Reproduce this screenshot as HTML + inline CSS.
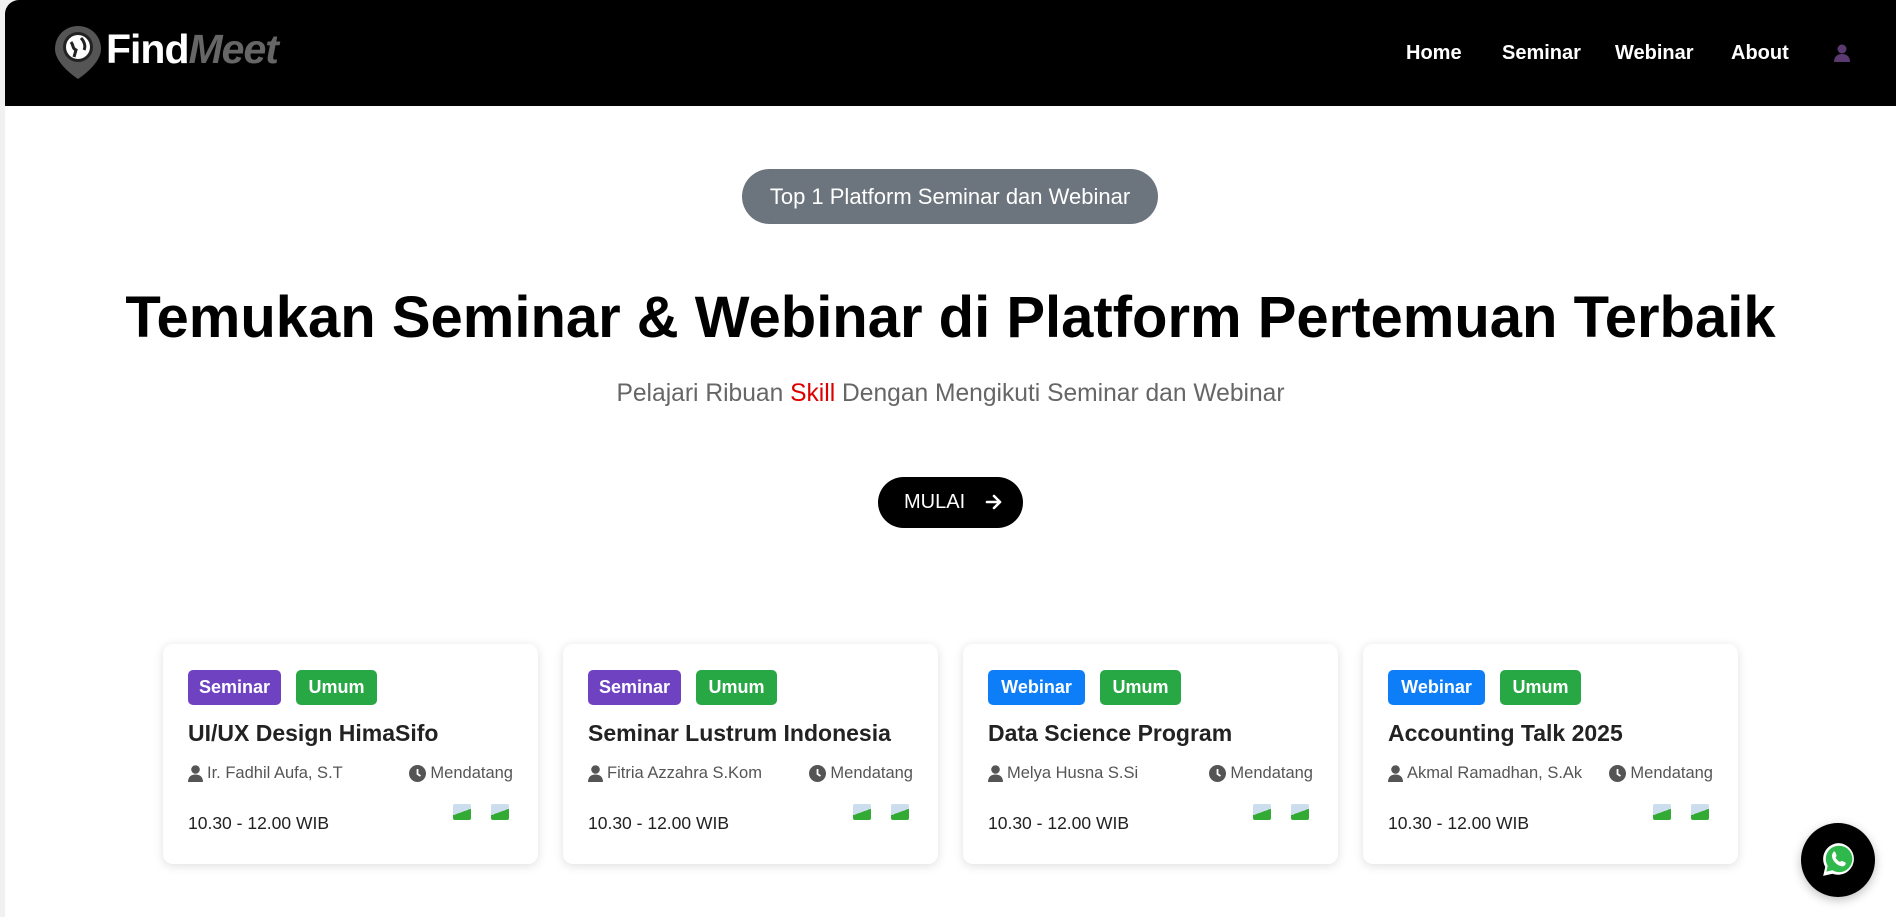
<!DOCTYPE html>
<html><head><meta charset="utf-8"><style>
*{margin:0;padding:0;box-sizing:border-box}
body{width:1896px;height:917px;overflow:hidden;background:#f1f1f1;font-family:"Liberation Sans",sans-serif;position:relative}
.page{position:absolute;left:5px;top:0;width:1891px;height:917px;background:#fff;border-radius:14px 0 0 0;overflow:hidden}
nav{position:absolute;left:0;top:0;width:100%;height:106px;background:#000}
.logo{position:absolute;left:48px;top:24px}
.brand{position:absolute;left:101px;top:26px;font-size:41px;font-weight:bold;color:#fff;letter-spacing:-1px}
.brand i{color:#666}
.nl{position:absolute;top:42px;font-size:20px;font-weight:bold;color:#fff}
.pill{position:absolute;left:737px;top:169px;width:416px;height:55px;border-radius:28px;background:#6c757d;color:#fff;font-size:22px;text-align:center;line-height:55px}
h1{position:absolute;left:0;width:1891px;top:284px;text-align:center;font-size:58px;font-weight:bold;color:#000}
.sub{position:absolute;left:0;width:1891px;top:380px;text-align:center;font-size:24.6px;color:#666}
.sub span{color:#d00}
.btn{position:absolute;left:873px;top:477px;width:145px;height:51px;border-radius:26px;background:#000;color:#fff;font-size:20px;line-height:51px;padding-left:26px}
.card{position:absolute;top:644px;width:375px;height:220px;background:#fff;border-radius:10px;box-shadow:0 2px 10px rgba(0,0,0,.13)}
.b{position:absolute;top:26px;height:35px;border-radius:5px;color:#fff;font-weight:bold;font-size:18px;line-height:35px;text-align:center}
.t{position:absolute;left:25px;top:76px;font-size:23px;font-weight:bold;color:#222}
.m{position:absolute;top:120px;font-size:16.5px;color:#555;display:flex;align-items:center;gap:4px;white-space:nowrap}
.tm{position:absolute;left:25px;top:169px;font-size:17.5px;color:#222}
.av{position:absolute;top:160px;width:22px;height:30px;overflow:hidden}
.av div{width:18px;height:16px;background:linear-gradient(160deg,#cde 50%,#3a3 50%);border-radius:2px}
.wa{position:absolute;left:1796px;top:823px;width:74px;height:74px;border-radius:50%;background:#000;box-shadow:0 3px 10px rgba(0,0,0,.25)}
</style></head><body><div class="page">
<nav>
<svg class="logo" width="50" height="56" viewBox="0 0 50 56"><path d="M25 2C12 2 2 12 2 25c0 12 14 24 23 30 9-6 23-18 23-30C48 12 38 2 25 2z" fill="#555"/><circle cx="25" cy="23" r="15" fill="#222"/><circle cx="25" cy="23" r="12" fill="#fff"/><path d="M18 18c3 4 1 6 5 8l-2 7M28 14c3 3 5 8 3 12" stroke="#222" stroke-width="3" fill="none"/></svg>
<div class="brand">Find<i>Meet</i></div>
<div class="nl" style="left:1401px">Home</div>
<div class="nl" style="left:1497px">Seminar</div>
<div class="nl" style="left:1610px">Webinar</div>
<div class="nl" style="left:1726px">About</div>
<svg style="position:absolute;left:1828px;top:44px" width="18" height="18" viewBox="0 0 18 18"><circle cx="9" cy="5" r="4.5" fill="#5a3a70"/><path d="M1 18c0-6 4-8 8-8s8 2 8 8z" fill="#5a3a70"/></svg>
</nav>
<div class="pill">Top 1 Platform Seminar dan Webinar</div>
<h1>Temukan Seminar &amp; Webinar di Platform Pertemuan Terbaik</h1>
<div class="sub">Pelajari Ribuan <span>Skill</span> Dengan Mengikuti Seminar dan Webinar</div>
<div class="btn">MULAI <svg style="margin-left:14px;vertical-align:-3px" width="18" height="18" viewBox="0 0 18 18"><path d="M2 9h13M9 3l6 6-6 6" stroke="#fff" stroke-width="2.6" fill="none" stroke-linecap="round" stroke-linejoin="round"/></svg></div>

<div class="card" style="left:158px"><div class="b" style="left:25px;width:93px;background:#6f42c1">Seminar</div><div class="b" style="left:133px;width:81px;background:#28a745">Umum</div><div class="t">UI/UX Design HimaSifo</div><div class="m" style="left:25px"><svg width="15" height="17" viewBox="0 0 15 17"><circle cx="7.5" cy="4.5" r="4.3" fill="#555"/><path d="M0 17c0-5 3-7.5 7.5-7.5S15 12 15 17z" fill="#555"/></svg>Ir. Fadhil Aufa, S.T</div><div class="m" style="right:25px"><svg width="17" height="17" viewBox="0 0 17 17"><circle cx="8.5" cy="8.5" r="8.5" fill="#555"/><path d="M8.5 4v5l3 2" stroke="#fff" stroke-width="1.8" fill="none"/></svg>Mendatang</div><div class="tm">10.30 - 12.00 WIB</div><div class="av" style="left:290px"><div></div></div><div class="av" style="left:328px"><div></div></div></div>

<div class="card" style="left:558px"><div class="b" style="left:25px;width:93px;background:#6f42c1">Seminar</div><div class="b" style="left:133px;width:81px;background:#28a745">Umum</div><div class="t">Seminar Lustrum Indonesia</div><div class="m" style="left:25px"><svg width="15" height="17" viewBox="0 0 15 17"><circle cx="7.5" cy="4.5" r="4.3" fill="#555"/><path d="M0 17c0-5 3-7.5 7.5-7.5S15 12 15 17z" fill="#555"/></svg>Fitria Azzahra S.Kom</div><div class="m" style="right:25px"><svg width="17" height="17" viewBox="0 0 17 17"><circle cx="8.5" cy="8.5" r="8.5" fill="#555"/><path d="M8.5 4v5l3 2" stroke="#fff" stroke-width="1.8" fill="none"/></svg>Mendatang</div><div class="tm">10.30 - 12.00 WIB</div><div class="av" style="left:290px"><div></div></div><div class="av" style="left:328px"><div></div></div></div>

<div class="card" style="left:958px"><div class="b" style="left:25px;width:97px;background:#0d7ef8">Webinar</div><div class="b" style="left:137px;width:81px;background:#28a745">Umum</div><div class="t">Data Science Program</div><div class="m" style="left:25px"><svg width="15" height="17" viewBox="0 0 15 17"><circle cx="7.5" cy="4.5" r="4.3" fill="#555"/><path d="M0 17c0-5 3-7.5 7.5-7.5S15 12 15 17z" fill="#555"/></svg>Melya Husna S.Si</div><div class="m" style="right:25px"><svg width="17" height="17" viewBox="0 0 17 17"><circle cx="8.5" cy="8.5" r="8.5" fill="#555"/><path d="M8.5 4v5l3 2" stroke="#fff" stroke-width="1.8" fill="none"/></svg>Mendatang</div><div class="tm">10.30 - 12.00 WIB</div><div class="av" style="left:290px"><div></div></div><div class="av" style="left:328px"><div></div></div></div>

<div class="card" style="left:1358px"><div class="b" style="left:25px;width:97px;background:#0d7ef8">Webinar</div><div class="b" style="left:137px;width:81px;background:#28a745">Umum</div><div class="t">Accounting Talk 2025</div><div class="m" style="left:25px"><svg width="15" height="17" viewBox="0 0 15 17"><circle cx="7.5" cy="4.5" r="4.3" fill="#555"/><path d="M0 17c0-5 3-7.5 7.5-7.5S15 12 15 17z" fill="#555"/></svg>Akmal Ramadhan, S.Ak</div><div class="m" style="right:25px"><svg width="17" height="17" viewBox="0 0 17 17"><circle cx="8.5" cy="8.5" r="8.5" fill="#555"/><path d="M8.5 4v5l3 2" stroke="#fff" stroke-width="1.8" fill="none"/></svg>Mendatang</div><div class="tm">10.30 - 12.00 WIB</div><div class="av" style="left:290px"><div></div></div><div class="av" style="left:328px"><div></div></div></div>

<div class="wa"><svg style="position:absolute;left:19px;top:18px" width="38" height="38" viewBox="0 0 36 36"><path d="M18 2a15 15 0 0 0-13 22.5L3 33l8.8-2A15 15 0 1 0 18 2z" fill="#fff"/><path d="M18 4.5a12.5 12.5 0 0 0-10.7 19l-1.2 5.5 5.6-1.3A12.5 12.5 0 1 0 18 4.5z" fill="#2fb94c"/><path d="M13 10c1 0 1.3.2 1.7 1.3l1 2.4c.2.6-.6 1.4-1 1.9.8 1.8 2.5 3.5 4.3 4.3.5-.4 1.3-1.2 1.9-1l2.4 1c1 .4 1.2.8 1 1.8-.3 1.300-1.6 2.3-3 2.3-4.8-.3-9.8-5.2-10-10 0-1.5 1-2.7 1.7-4z" fill="#fff"/></svg></div>
</div></body></html>
